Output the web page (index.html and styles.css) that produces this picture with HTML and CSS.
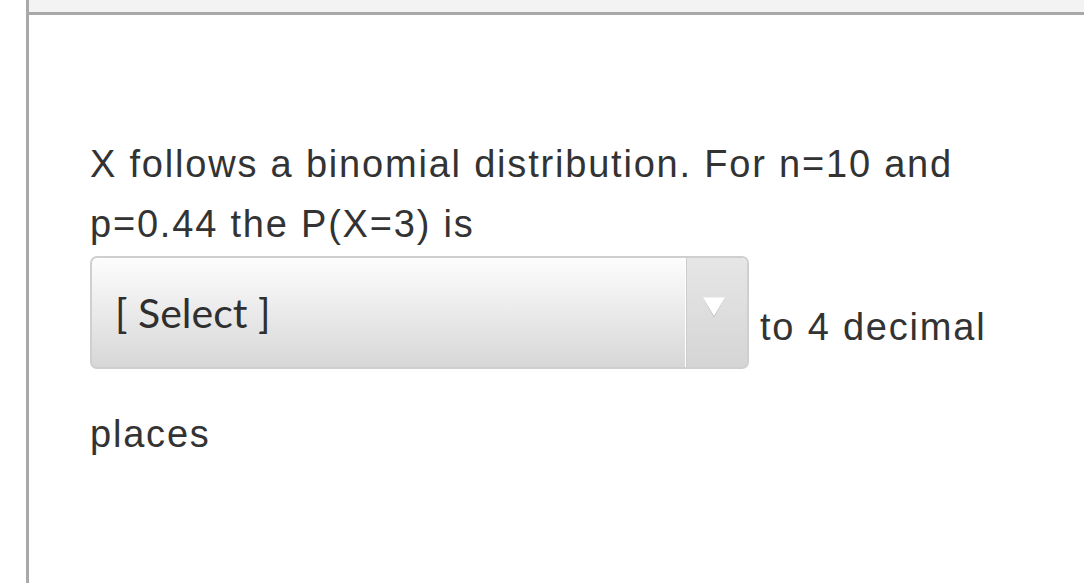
FILE: index.html
```html
<!DOCTYPE html>
<html>
<head>
<meta charset="utf-8">
<link rel="stylesheet" href="styles.css">
</head>
<body>
<div class="frame">
  <div class="prev"></div>
  <div class="question">
    <p class="text">X follows a binomial distribution. For n=10 and p=0.44 the P(X=3) is</p>
    <div class="answer-row">
      <div class="select">
        <span class="select-label">[ Select ]</span>
        <span class="select-arrow">
          <svg width="24" height="22" viewBox="0 0 24 22">
            <polygon points="1.5,1.5 22.5,1.5 12,20.5" fill="#b8b8b8"/>
            <polygon points="1,0.5 23,0.5 12,19" fill="#ffffff"/>
          </svg>
        </span>
      </div>
      <span class="after">to 4 decimal</span>
    </div>
    <p class="text places">places</p>
  </div>
</div>
</body>
</html>
```

FILE: styles.css
```css
html, body {
  margin: 0;
  padding: 0;
  background: #ffffff;
}
body {
  width: 1084px;
  height: 583px;
  overflow: hidden;
}
.frame {
  margin-left: 26px;
  border-left: 3px solid #a9a9a9;
  height: 583px;
}
.prev {
  height: 12px;
  background: #f3f3f3;
  border-bottom: 3px solid #a8a8a8;
}
.question {
  padding: 119px 0 0 61px;
  width: 900px;
  font-family: "Liberation Sans", Arial, sans-serif;
  font-size: 38px;
  letter-spacing: 1.8px;
  line-height: 60px;
  color: #333333;
}
.text {
  margin: 0;
}
.answer-row {
  display: flex;
  align-items: flex-start;
  margin-top: 2px;
}
.select {
  box-sizing: border-box;
  width: 659px;
  height: 113px;
  border: 2px solid #cfcfcf;
  border-radius: 7px;
  background: linear-gradient(#fdfdfd, #d7d7d7);
  display: flex;
  overflow: hidden;
  flex-shrink: 0;
}
.select-label {
  flex: 1;
  padding-left: 23px;
  padding-top: 30px;
  font-family: Lato, "Open Sans", sans-serif;
  font-size: 41px;
  letter-spacing: 0;
  line-height: 50px;
  color: #2f2f2f;
  border-right: 1px solid #ffffff;
}
.select-arrow {
  width: 61px;
  border-left: 1px solid #cdcdcd;
  background: linear-gradient(#e6e6e6, #d5d5d5);
  display: flex;
  justify-content: center;
  align-items: flex-start;
  padding-top: 39px;
  padding-right: 6px;
  box-sizing: border-box;
}
.select-arrow svg {
  display: block;
}
.after {
  margin-top: 41px;
  margin-left: 11px;
  white-space: nowrap;
}
.places {
  margin-top: 35px;
}
```
